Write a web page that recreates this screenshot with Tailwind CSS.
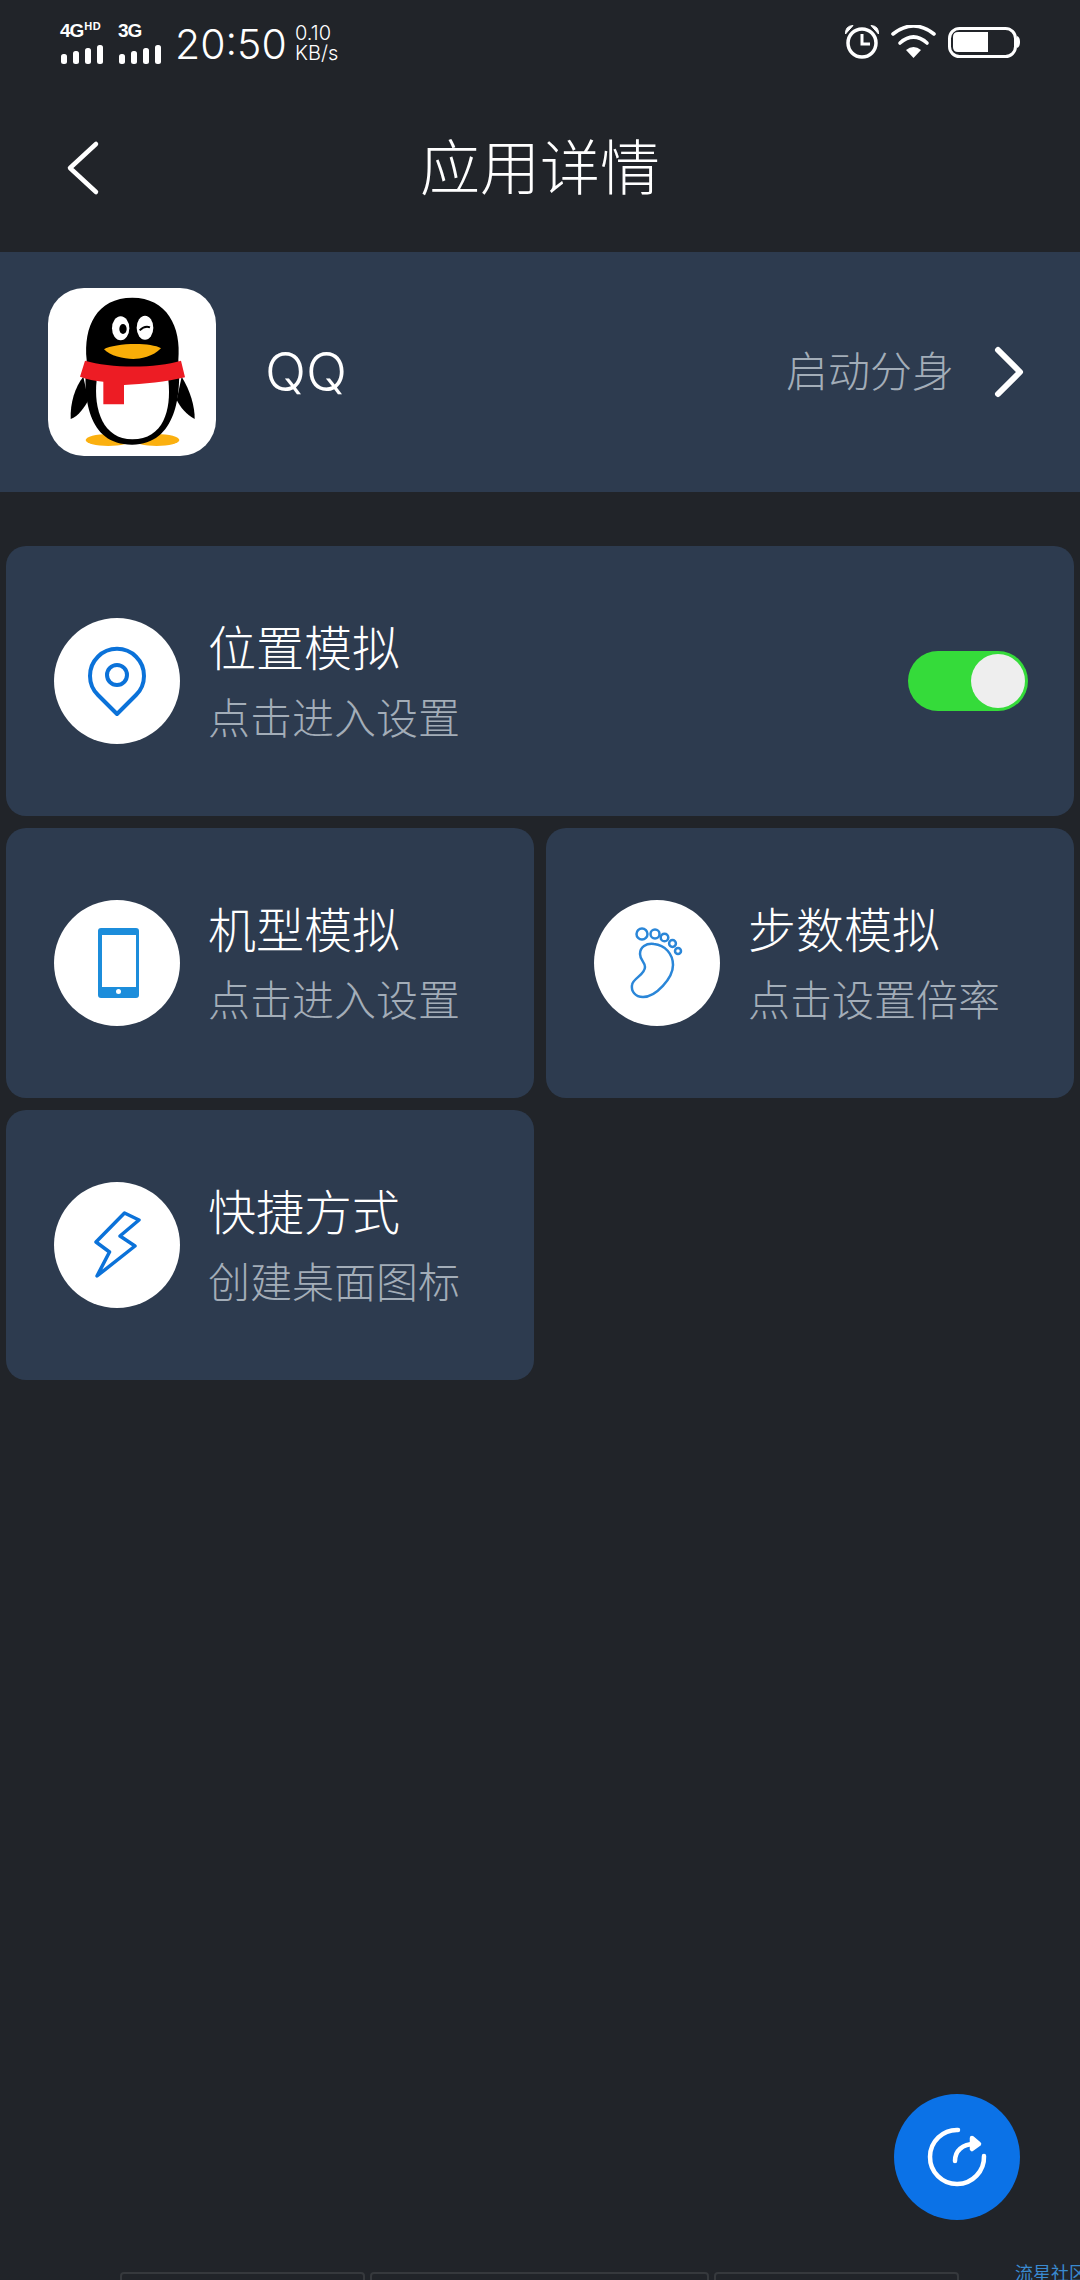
<!DOCTYPE html>
<html lang="zh-CN">
<head>
    <meta charset="UTF-8">
    <meta name="viewport" content="width=device-width, initial-scale=1.0">
    <title>应用详情</title>
    <script src="https://cdn.jsdelivr.net/npm/@tailwindcss/browser@4"></script>
</head>
<body class="bg-[#212429]">
    <div class="relative w-[1080px] h-[2280px] overflow-hidden bg-[#212429] text-white font-['Inter','Noto_Sans_CJK_SC',sans-serif]">

        <!-- status bar -->
        <div class="flex items-start justify-between h-[84px] pl-[60px] pr-[60px]">
            <div class="flex items-start">
                <div class="w-[58px] pt-[21px]">
                    <div class="flex items-start h-[18px] font-['Liberation_Sans',sans-serif] font-bold leading-none">
                        <span class="text-[19px] tracking-[-1px]">4G</span>
                        <span class="text-[11px] ml-[1px] tracking-[0.5px]">HD</span>
                    </div>
                    <svg class="mt-[5px]" width="44" height="22" viewBox="0 0 44 22" fill="#fff">
                        <rect x="1" y="10" width="6" height="10" rx="2.5"/>
                        <rect x="13" y="7" width="6" height="13" rx="2.5"/>
                        <rect x="25" y="4" width="6" height="16" rx="2.5"/>
                        <rect x="37" y="1" width="6" height="19" rx="2.5"/>
                    </svg>
                </div>
                <div class="w-[57px] pt-[21px]">
                    <div class="h-[18px] text-[19px] tracking-[-1px] font-['Liberation_Sans',sans-serif] font-bold leading-none">3G</div>
                    <svg class="mt-[5px]" width="44" height="22" viewBox="0 0 44 22" fill="#fff">
                        <rect x="1" y="10" width="6" height="10" rx="2.5"/>
                        <rect x="13" y="7" width="6" height="13" rx="2.5"/>
                        <rect x="25" y="4" width="6" height="16" rx="2.5"/>
                        <rect x="37" y="1" width="6" height="19" rx="2.5"/>
                    </svg>
                </div>
                <div class="text-[41px] leading-[50px] pt-[19px] font-light w-[120px]">20:50</div>
                <div class="pt-[23px] text-[20px] leading-[20px] font-light">
                    <div>0.10</div>
                    <div>KB/s</div>
                </div>
            </div>
            <div class="flex items-start pt-[25px] gap-[12px]">
                <svg width="34" height="34" viewBox="845 25 34 34" fill="none" stroke="#fff">
                    <circle cx="862" cy="43" r="14" stroke-width="3.5"/>
                    <path d="M862 34V44H870" stroke-width="3"/>
                    <path d="M845.5 34Q845 26 853 25.5Z" fill="#fff" stroke-width="1"/>
                    <path d="M878.5 34Q879 26 871 25.5Z" fill="#fff" stroke-width="1"/>
                </svg>
                <svg width="45" height="34" viewBox="891 25 45 34" fill="none" stroke="#fff" stroke-width="3.6" stroke-linecap="round">
                    <path d="M893 34Q913.5 18 934 34"/>
                    <path d="M900 43Q913.5 31 927 43"/>
                    <path d="M906 50Q913.5 44 921 50L913.5 58Z" fill="#fff" stroke="none"/>
                </svg>
                <svg width="72" height="34" viewBox="948 25 72 34" fill="none">
                    <rect x="949.5" y="28.5" width="66" height="28" rx="10" stroke="#fff" stroke-width="3"/>
                    <path d="M958 32H988V52H958Q953 52 953 47V37Q953 32 958 32Z" fill="#fff"/>
                    <path d="M1017 36Q1020 37 1020 42Q1020 47 1017 48Z" fill="#fff"/>
                </svg>
            </div>
        </div>

        <!-- header -->
        <div class="relative flex items-center justify-center h-[168px]">
            <svg class="absolute left-[60px] top-[50px]" width="46" height="68" viewBox="60 134 46 68" fill="none" stroke="#fff" stroke-width="4.5" stroke-linecap="round" stroke-linejoin="round">
                <path d="M96 144L70 168L96 192"/>
            </svg>
            <h1 class="text-[60px] font-light leading-none">应用详情</h1>
        </div>

        <!-- app row -->
        <div class="flex items-center h-[240px] pl-[48px] pr-[56px] bg-[#2d3b4f]">
            <div class="w-[168px] h-[168px] rounded-[36px] bg-white overflow-hidden">
                <svg width="168" height="168" viewBox="144 114 504 504">
                    <ellipse cx="325" cy="570" rx="68" ry="18" fill="#fbb00f"/>
                    <ellipse cx="470" cy="570" rx="68" ry="18" fill="#fbb00f"/>
                    <path d="M250 380C225 410 210 460 212 507C235 500 255 470 265 450Z" fill="#000"/>
                    <path d="M545 380C570 420 585 470 584 507C560 495 540 470 530 450Z" fill="#000"/>
                    <path d="M260 330C250 230 290 143 397 143C500 143 545 230 535 330C545 430 530 583 397 584C262 585 248 440 260 330Z" fill="#000"/>
                    <path d="M290 390L505 390C515 480 490 568 397 568C310 568 280 480 290 390Z" fill="#fff"/>
                    <ellipse cx="362" cy="235" rx="26" ry="36" fill="#fff"/>
                    <ellipse cx="369" cy="237" rx="11" ry="15" fill="#000"/>
                    <ellipse cx="435" cy="233" rx="25" ry="36" fill="#fff"/>
                    <path d="M419 241Q434 226 450 232" fill="none" stroke="#000" stroke-width="6"/>
                    <path d="M312 298C340 280 450 275 483 295C460 320 420 327 400 327C370 327 330 318 312 298Z" fill="#f9ae08"/>
                    <path d="M255 332C330 355 470 355 543 332L555 382C500 395 430 403 372 405L372 463L310 463L310 395C285 393 260 387 240 380Z" fill="#ed1c24"/>
                </svg>
            </div>
            <span class="ml-[49px] text-[54px] font-light leading-none">QQ</span>
            <span class="ml-auto text-[42px] font-light leading-none text-[#a3adb8]">启动分身</span>
            <svg class="ml-[40px]" width="30" height="52" viewBox="994 346 30 52" fill="none" stroke="#fff" stroke-width="6" stroke-linecap="round" stroke-linejoin="round">
                <path d="M998 350L1020 372L998 394"/>
            </svg>
        </div>

        <!-- feature cards -->
        <div class="grid grid-cols-2 gap-[12px] px-[6px] mt-[54px]">
            <div class="col-span-2 flex items-center h-[270px] pl-[48px] pr-[48px] rounded-[20px] bg-[#2d3b4f]">
                <div class="w-[126px] h-[126px] rounded-full bg-white shrink-0">
                    <svg width="126" height="126" viewBox="0 0 126 126" fill="none" stroke="#0b72d9" stroke-width="4">
                        <path d="M63 96L44 77A27 27 0 1 1 82 77Z" stroke-linejoin="round"/>
                        <circle cx="63" cy="57" r="10"/>
                    </svg>
                </div>
                <div class="ml-[28px]">
                    <div class="text-[48px] leading-[60px] font-light">位置模拟</div>
                    <div class="mt-[15px] text-[42px] leading-[50px] font-light text-[#a3adb8]">点击进入设置</div>
                </div>
                <div class="relative ml-auto mr-[-2px] w-[120px] h-[60px] rounded-full bg-[#35db3a]">
                    <div class="absolute right-[3px] top-[3px] w-[54px] h-[54px] rounded-full bg-[#eeeeee]"></div>
                </div>
            </div>

            <div class="flex items-center h-[270px] pl-[48px] rounded-[20px] bg-[#2d3b4f]">
                <div class="w-[126px] h-[126px] rounded-full bg-white shrink-0">
                    <svg width="126" height="126" viewBox="0 0 126 126">
                        <path fill-rule="evenodd" d="M47 28H82Q85 28 85 31V95Q85 98 82 98H47Q44 98 44 95V31Q44 28 47 28ZM48 35V87H82V35Z" fill="#1c8ddb"/>
                        <circle cx="64.5" cy="91.5" r="2.5" fill="#fff"/>
                    </svg>
                </div>
                <div class="ml-[28px]">
                    <div class="text-[48px] leading-[60px] font-light">机型模拟</div>
                    <div class="mt-[15px] text-[42px] leading-[50px] font-light text-[#a3adb8]">点击进入设置</div>
                </div>
            </div>

            <div class="flex items-center h-[270px] pl-[48px] rounded-[20px] bg-[#2d3b4f]">
                <div class="w-[126px] h-[126px] rounded-full bg-white shrink-0">
                    <svg width="126" height="126" viewBox="0 0 126 126" fill="none" stroke="#2a86d8" stroke-width="2.5">
                        <circle cx="48" cy="34" r="5.5"/>
                        <circle cx="61" cy="34" r="4.5"/>
                        <circle cx="70.5" cy="37.5" r="3.8"/>
                        <circle cx="78.5" cy="43.5" r="3.4"/>
                        <circle cx="84" cy="51" r="3"/>
                        <path d="M46 54C46 47 52 43 60 44C71 45 79 54 79 65C79 78 62 97 49 97C41 97 37 91 38 85C39 78 51 75 51 67C51 62 46 60 46 54Z"/>
                    </svg>
                </div>
                <div class="ml-[28px]">
                    <div class="text-[48px] leading-[60px] font-light">步数模拟</div>
                    <div class="mt-[15px] text-[42px] leading-[50px] font-light text-[#a3adb8]">点击设置倍率</div>
                </div>
            </div>

            <div class="flex items-center h-[270px] pl-[48px] rounded-[20px] bg-[#2d3b4f]">
                <div class="w-[126px] h-[126px] rounded-full bg-white shrink-0">
                    <svg width="126" height="126" viewBox="0 0 126 126" fill="none" stroke="#0b72d9" stroke-width="3.5" stroke-linejoin="round">
                        <path d="M70.5 31L85 38L66 54L81 64L43 94L55.5 70L42 60Z"/>
                    </svg>
                </div>
                <div class="ml-[28px]">
                    <div class="text-[48px] leading-[60px] font-light">快捷方式</div>
                    <div class="mt-[15px] text-[42px] leading-[50px] font-light text-[#a3adb8]">创建桌面图标</div>
                </div>
            </div>
        </div>

        <!-- refresh button -->
        <div class="absolute left-[894px] top-[2094px] w-[126px] h-[126px] rounded-full bg-[#0b72e7]">
            <svg width="126" height="126" viewBox="0 0 126 126" fill="none" stroke="#fff" stroke-width="4.5" stroke-linecap="round" stroke-linejoin="round">
                <path d="M64 36A27 27 0 1 0 90 62"/>
                <path d="M61 67C61 57 68 50 81 50"/>
                <path d="M78 44L85 50L78 55Z" fill="#fff"/>
            </svg>
        </div>

        <!-- clipped bottom strip -->
        <div class="absolute left-[120px] top-[2272px] flex gap-[5px]">
            <div class="w-[245px] h-[20px] rounded-t-[4px] border-2 border-[#36393d]"></div>
            <div class="w-[339px] h-[20px] rounded-t-[4px] border-2 border-[#36393d]"></div>
            <div class="w-[245px] h-[20px] rounded-t-[4px] border-2 border-[#36393d]"></div>
        </div>
        <div class="absolute left-[1015px] top-[2264px] w-[80px] text-[18px] leading-[20px] whitespace-nowrap text-[#3a8ad0]">流星社区</div>
    </div>
</body>
</html>
